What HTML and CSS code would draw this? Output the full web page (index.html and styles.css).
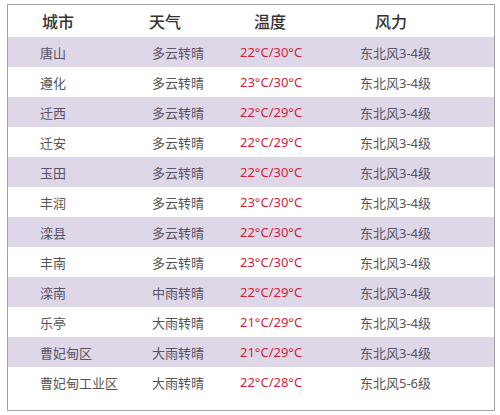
FILE: index.html
```html
<!DOCTYPE html>
<html lang="zh">
<head>
<meta charset="utf-8">
<link rel="stylesheet" href="styles.css">
</head>
<body>
<div class="frame">
  <div class="row head">
    <div class="c1">城市</div><div class="c2">天气</div><div class="c3">温度</div><div class="c4">风力</div>
  </div>
  <div class="row alt"><div class="c1">唐山</div><div class="c2">多云转晴</div><div class="c3 t">22°C/30°C</div><div class="c4">东北风3-4级</div></div>
  <div class="row"><div class="c1">遵化</div><div class="c2">多云转晴</div><div class="c3 t">23°C/30°C</div><div class="c4">东北风3-4级</div></div>
  <div class="row alt"><div class="c1">迁西</div><div class="c2">多云转晴</div><div class="c3 t">22°C/29°C</div><div class="c4">东北风3-4级</div></div>
  <div class="row"><div class="c1">迁安</div><div class="c2">多云转晴</div><div class="c3 t">22°C/29°C</div><div class="c4">东北风3-4级</div></div>
  <div class="row alt"><div class="c1">玉田</div><div class="c2">多云转晴</div><div class="c3 t">22°C/30°C</div><div class="c4">东北风3-4级</div></div>
  <div class="row"><div class="c1">丰润</div><div class="c2">多云转晴</div><div class="c3 t">23°C/30°C</div><div class="c4">东北风3-4级</div></div>
  <div class="row alt"><div class="c1">滦县</div><div class="c2">多云转晴</div><div class="c3 t">22°C/30°C</div><div class="c4">东北风3-4级</div></div>
  <div class="row"><div class="c1">丰南</div><div class="c2">多云转晴</div><div class="c3 t">23°C/30°C</div><div class="c4">东北风3-4级</div></div>
  <div class="row alt"><div class="c1">滦南</div><div class="c2">中雨转晴</div><div class="c3 t">22°C/29°C</div><div class="c4">东北风3-4级</div></div>
  <div class="row"><div class="c1">乐亭</div><div class="c2">大雨转晴</div><div class="c3 t">21°C/29°C</div><div class="c4">东北风3-4级</div></div>
  <div class="row alt"><div class="c1">曹妃甸区</div><div class="c2">大雨转晴</div><div class="c3 t">21°C/29°C</div><div class="c4">东北风3-4级</div></div>
  <div class="row"><div class="c1">曹妃甸工业区</div><div class="c2">大雨转晴</div><div class="c3 t">22°C/28°C</div><div class="c4">东北风5-6级</div></div>
</div>
</body>
</html>
```
FILE: styles.css
```css
html, body {
  margin: 0;
  padding: 0;
  background: #ffffff;
}
body {
  font-family: "Noto Sans", "Noto Sans CJK SC", sans-serif;
  font-size: 13px;
  color: #555555;
}
.frame {
  margin: 4px 6px 0 7px;
  width: 486px;
  height: 405px;
  border: 1px solid #a3a3a3;
  box-sizing: content-box;
  padding-bottom: 0;
}
.row {
  display: grid;
  grid-template-columns: 144px 88px 120px 1fr;
  height: 30px;
  align-items: center;
}
.row.alt {
  background: #ddd7e7;
  color: #5a5466;
}
.row .c1 { padding-left: 32px; }
.head {
  height: 32px;
  font-size: 16px;
  color: #333333;
  font-weight: 500;
}
.head .c1 { padding-left: 34px; }
.head .c2 { margin-left: -3px; }
.head .c3 { padding-left: 14px; }
.head .c4 { padding-left: 15px; }
.t {
  color: #d21f3a;
}
```
